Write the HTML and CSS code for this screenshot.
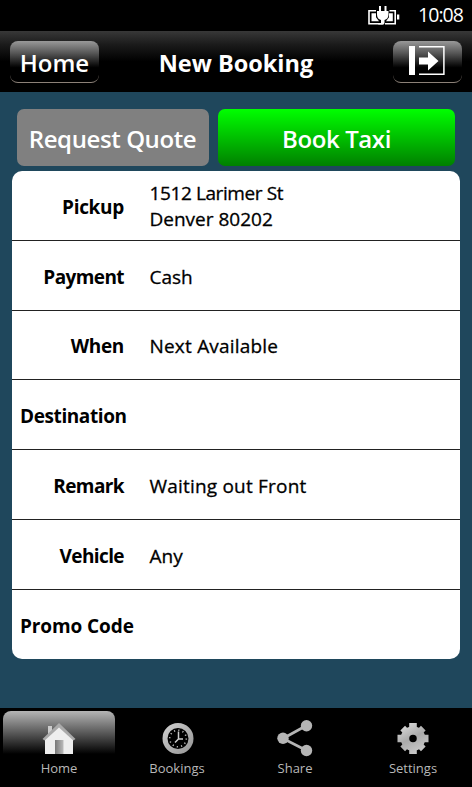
FILE: index.html
```html
<!DOCTYPE html>
<html lang="en">
<head>
<meta charset="utf-8">
<title>New Booking</title>
<link rel="stylesheet" href="styles.css">
</head>
<body>
<div class="status">
  <svg class="battery" width="32" height="20" viewBox="0 0 32 20">
    <path d="M8 5.700H1v13H11M21.500 5.700h5.700v13H17" fill="none" stroke="#fff" stroke-width="1.600"/>
    <path d="M3.500 8.200H8v4l3 4H3.500zM21 8.200h3.800v8H18l3-4zM29 9.500h2.300v5H29z" fill="#fff"/>
    <path d="M11 1h2v5h3.500V1h2v5h2v3.500c0 3-1.500 5-4 5.500v2.500c0 1.500-1 2.200-2 2.200h-4V18h2.500v-3C10.500 14.500 9 12.500 9 9.500V6h2z" fill="#fff"/>
  </svg>
  <span class="time">10:08</span>
</div>
<header class="header">
  <button class="glossy home-btn">Home</button>
  <h1 class="title">New Booking</h1>
  <button class="glossy exit-btn" aria-label="Log out">
    <svg width="36" height="32" viewBox="0 0 36 32">
      <path d="M0 1h6v29H0z" fill="#fff"/>
      <path d="M10 1.700h24.900v27.600H10" fill="none" stroke="#fff" stroke-width="1.500"/>
      <path d="M10 12.500h9V6.500l10.500 9.500L19 25.500v-6h-9z" fill="#fff"/>
    </svg>
  </button>
</header>
<main class="main">
  <div class="actions">
    <button class="action quote">Request Quote</button>
    <button class="action book">Book Taxi</button>
  </div>
  <div class="card">
    <div class="row"><div class="label">Pickup</div><div class="value address"><div class="street">1512 Larimer St</div><div>Denver 80202</div></div></div>
    <div class="row"><div class="label tight">Payment</div><div class="value">Cash</div></div>
    <div class="row"><div class="label">When</div><div class="value loose">Next Available</div></div>
    <div class="row"><div class="label wide">Destination</div></div>
    <div class="row"><div class="label tight">Remark</div><div class="value loose">Waiting out Front</div></div>
    <div class="row"><div class="label tight">Vehicle</div><div class="value">Any</div></div>
    <div class="row"><div class="label promo">Promo Code</div></div>
  </div>
</main>
<nav class="nav">
  <a class="tab active">
    <svg width="36" height="40" viewBox="0 0 36 40">
      <defs><linearGradient id="door" x1="0" x2="1"><stop offset="0" stop-color="#777"/><stop offset="1" stop-color="#bbb"/></linearGradient></defs>
      <path d="M7 8h4v9H7z" fill="#ccc"/>
      <path d="M4 20 18 8l14 12v16H4z" fill="#eee"/>
      <path d="M1.500 21 18 5l16.500 16-2.200 1.500L18 9.500 3.700 22.500z" fill="#aaa"/>
      <path d="M14 22h8.500v14H14z" fill="url(#door)"/>
    </svg>
    <span>Home</span>
  </a>
  <a class="tab">
    <svg width="36" height="40" viewBox="0 0 36 40">
      <defs><linearGradient id="ring" x1="0" y1="0" x2="1" y2="1"><stop offset="0" stop-color="#ccc"/><stop offset="1" stop-color="#999"/></linearGradient></defs>
      <circle cx="19" cy="20.500" r="13" fill="none" stroke="url(#ring)" stroke-width="5"/>
      <circle cx="19" cy="20.500" r="8.300" fill="none" stroke="#bbb" stroke-width="1.600" stroke-dasharray="1.200 3.146"/>
      <path d="M19.500 13.500V21M24 21h-4.500L16 24.500" fill="none" stroke="#ccc" stroke-width="1.500"/>
    </svg>
    <span>Bookings</span>
  </a>
  <a class="tab">
    <svg width="36" height="40" viewBox="0 0 36 40">
      <path d="M29.500 7.500 6 20.500l23.500 12" fill="none" stroke="#b5b5b5" stroke-width="2.700"/>
      <g fill="#b5b5b5"><circle cx="29.500" cy="7.700" r="5.700"/><circle cx="6" cy="20.300" r="5.700"/><circle cx="29.500" cy="32.500" r="5.700"/></g>
    </svg>
    <span>Share</span>
  </a>
  <a class="tab">
    <svg width="36" height="40" viewBox="0 0 36 40">
      <defs><linearGradient id="gear" gradientUnits="userSpaceOnUse" x1="8" y1="5" x2="24" y2="36"><stop offset="0" stop-color="#ddd"/><stop offset=".5" stop-color="#aaa"/><stop offset="1" stop-color="#ccc"/></linearGradient></defs>
      <g fill="none" stroke="url(#gear)">
        <circle cx="18" cy="20.500" r="8" stroke-width="8.500"/>
        <path stroke-width="7.600" d="M18 5v6M18 30v6M2.500 20.500h6M27.500 20.500h6"/>
        <path stroke-width="6.600" d="M7.700 10.200 12 14.500M24 26.500l4.300 4.300M28.300 10.200 24 14.500M12 26.500l-4.300 4.300"/>
      </g>
    </svg>
    <span>Settings</span>
  </a>
</nav>
</body>
</html>
```
FILE: styles.css
```css
* { box-sizing: border-box; }
body {
  margin: 0;
  width: 472px;
  height: 787px;
  overflow: hidden;
  display: flex;
  flex-direction: column;
  background: #1f475c;
  font-family: "Open Sans", "Noto Sans", sans-serif;
}
button { border: 0; padding: 0; font: inherit; color: #fff; }
.status {
  height: 31px;
  background: #000;
  display: flex;
  justify-content: flex-end;
  align-items: center;
  gap: 18px;
  padding-right: 9px;
  color: #fff;
}
.battery { margin-top: -2px; }
.time { font-size: 19.5px; letter-spacing: -0.95px; line-height: 30px; margin-top: -2px; }
.header {
  height: 61px;
  display: flex;
  justify-content: space-between;
  align-items: center;
  padding: 0 10px;
  background: linear-gradient(#383838, #1b1b1b 22%, #000 50%);
}
.glossy {
  height: 42px;
  border-radius: 8px;
  border-bottom: 1px solid #8c8178;
  background: linear-gradient(#999, #555 30%, #151515 56%, #000 65%);
  display: flex;
  align-items: center;
  justify-content: center;
}
.home-btn { width: 89px; font-size: 24px; font-weight: 600; padding-top: 2px; }
.exit-btn { width: 69px; padding-bottom: 1px; }
.title { margin: 3px 0 0; font-size: 23.5px; line-height: 32px; font-weight: 700; color: #fff; white-space: nowrap; position: relative; left: -10px; }
.main { flex: 1; padding: 17px 12px 0; }
.actions { display: flex; gap: 9px; padding: 0 5px; height: 57px; }
.action { border-radius: 7px; font-size: 24px; font-weight: 600; letter-spacing: -0.4px; white-space: nowrap; padding-top: 2px; }
.quote { width: 192px; padding-right: 1px; background: #808080; }
.book { flex: 1; background: linear-gradient(#0f0, #008000); }
.card { margin-top: 5px; height: 488px; background: #fff; border-radius: 10px; overflow: hidden; color: #000; }
.row { height: 69.8px; display: flex; align-items: center; padding: 3px 8px 0; border-bottom: 1px solid #222; }
.row:last-child { border-bottom: 0; }
.label { width: 104px; text-align: right; font-size: 19px; font-weight: 700; white-space: nowrap; letter-spacing: -0.3px; }
.tight { letter-spacing: -0.6px; }
.wide { text-align: left; letter-spacing: -0.4px; }
.promo { text-align: left; letter-spacing: -0.1px; }
.value { margin-left: 25.5px; font-size: 19px; line-height: 26px; white-space: nowrap; -webkit-text-stroke: 0.3px #000; }
.address { margin-top: -2px; }
.street { letter-spacing: -0.4px; }
.loose { letter-spacing: 0.2px; }
.nav { height: 79px; display: grid; grid-template-columns: repeat(4, 1fr); background: #000; }
.tab {
  display: flex;
  flex-direction: column;
  align-items: center;
  margin: 3px 3px 0;
  padding-top: 7px;
  border-radius: 8px 8px 0 0;
  color: #b8b8b8;
  font-size: 13px;
  line-height: 20px;
}
.active { background: linear-gradient(#b5b5b5, #000 43px); }
```
